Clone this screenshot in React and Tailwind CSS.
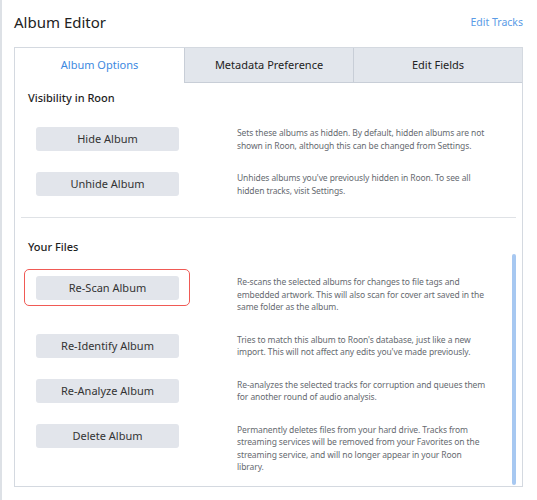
import React from "react";

const tabs = ["Album Options", "Metadata Preference", "Edit Fields"];

const visibility = [
  {
    label: "Hide Album",
    text: "Sets these albums as hidden. By default, hidden albums are not shown in Roon, although this can be changed from Settings.",
  },
  {
    label: "Unhide Album",
    text: "Unhides albums you've previously hidden in Roon. To see all hidden tracks, visit Settings.",
  },
];

const files = [
  {
    label: "Re-Scan Album",
    text: "Re-scans the selected albums for changes to file tags and embedded artwork. This will also scan for cover art saved in the same folder as the album.",
    marked: true,
  },
  {
    label: "Re-Identify Album",
    text: "Tries to match this album to Roon's database, just like a new import. This will not affect any edits you've made previously.",
  },
  {
    label: "Re-Analyze Album",
    text: "Re-analyzes the selected tracks for corruption and queues them for another round of audio analysis.",
  },
  {
    label: "Delete Album",
    text: "Permanently deletes files from your hard drive. Tracks from streaming services will be removed from your Favorites on the streaming service, and will no longer appear in your Roon library.",
  },
];

function OptionRow({ label, text, marked }) {
  return (
    <div className="flex items-start">
      <div className="relative ml-[21px] shrink-0">
        {marked && (
          <div className="absolute -left-[12px] -right-[11px] -top-[7px] -bottom-[6px] rounded-[5px] border border-[#f05a55]" />
        )}
        <button className="block w-[143px] h-[24px] rounded-[3px] bg-[#e2e5eb] text-[11px] font-normal text-[#333] leading-[24px]">
          {label}
        </button>
      </div>
      <p className="ml-[58px] w-[251px] text-[8.5px] tracking-[-0.1px] leading-[12.5px] text-[#666a70]">{text}</p>
    </div>
  );
}

function Section({ title, rows }) {
  return (
    <div className="flex flex-col gap-5">
      <h2 className="ml-[13px] text-[11px] leading-[18px] font-medium text-[#1e1e1e]">{title}</h2>
      {rows.map((r) => (
        <OptionRow key={r.label} {...r} />
      ))}
    </div>
  );
}

export default function App() {
  return (
    <div className="relative w-[537px] min-h-[500px] bg-white border-l-2 border-[#dde1e6] font-['Noto_Sans',sans-serif]">
      <div className="flex items-center justify-between pl-[12px] pr-[14px] pt-[10px] h-[35px]">
        <h1 className="text-[15px] leading-[25px] text-[#222]">Album Editor</h1>
        <a className="text-[10.5px] text-[#5a9be6]">Edit Tracks</a>
      </div>

      <div className="relative ml-[12px] mr-[14px] mt-[12px] border border-[#d4d9e0]">
        <div className="grid grid-cols-3 h-[35px]">
          {tabs.map((t, i) => (
            <div
              key={t}
              className={
                i === 0
                  ? "flex items-center justify-center bg-white text-[11px] text-[#3d89df]"
                  : "flex items-center justify-center bg-[#e2e6ec] border-l border-b border-[#c8ced7] text-[11px] text-[#222]"
              }
            >
              {t}
            </div>
          ))}
        </div>

        <div className="pt-[6px] pb-[12px] flex flex-col">
          <Section title="Visibility in Roon" rows={visibility} />
          <div className="mx-[6px] my-5 border-t border-[#dfe2e6]" />
          <Section title="Your Files" rows={files} />
        </div>

        <div className="absolute right-[6px] top-[206px] bottom-[1px] w-[4px] rounded-full bg-[#a7c8f1]" />
      </div>
    </div>
  );
}
